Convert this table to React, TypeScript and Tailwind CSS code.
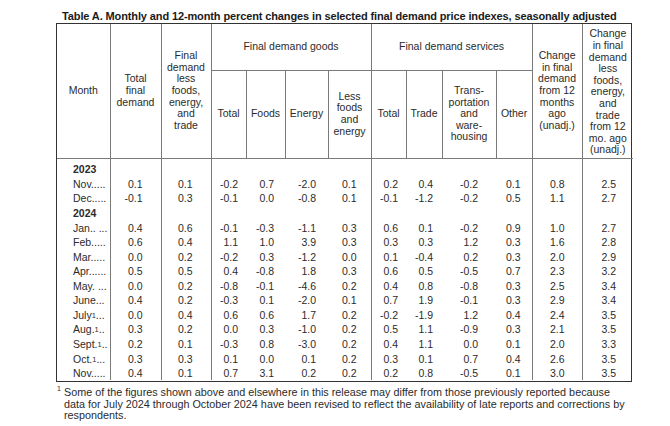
import React from 'react';

type Row = { label: string; sup?: boolean; dots: string; values?: string[]; year?: boolean };

const rows: Row[] = [
  { label: '2023', dots: '', year: true },
  { label: 'Nov.', dots: '....', values: ['0.1', '0.1', '-0.2', '0.7', '-2.0', '0.1', '0.2', '0.4', '-0.2', '0.1', '0.8', '2.5'] },
  { label: 'Dec.', dots: '....', values: ['-0.1', '0.3', '-0.1', '0.0', '-0.8', '0.1', '-0.1', '-1.2', '-0.2', '0.5', '1.1', '2.7'] },
  { label: '2024', dots: '', year: true },
  { label: 'Jan.', dots: '. ...', values: ['0.4', '0.6', '-0.1', '-0.3', '-1.1', '0.3', '0.6', '0.1', '-0.2', '0.9', '1.0', '2.7'] },
  { label: 'Feb.', dots: '....', values: ['0.6', '0.4', '1.1', '1.0', '3.9', '0.3', '0.3', '0.3', '1.2', '0.3', '1.6', '2.8'] },
  { label: 'Mar.', dots: '....', values: ['0.0', '0.2', '-0.2', '0.3', '-1.2', '0.0', '0.1', '-0.4', '0.2', '0.3', '2.0', '2.9'] },
  { label: 'Apr.', dots: '.....', values: ['0.5', '0.5', '0.4', '-0.8', '1.8', '0.3', '0.6', '0.5', '-0.5', '0.7', '2.3', '3.2'] },
  { label: 'May.', dots: ' ...', values: ['0.0', '0.2', '-0.8', '-0.1', '-4.6', '0.2', '0.4', '0.8', '-0.8', '0.3', '2.5', '3.4'] },
  { label: 'June', dots: '...', values: ['0.4', '0.2', '-0.3', '0.1', '-2.0', '0.1', '0.7', '1.9', '-0.1', '0.3', '2.9', '3.4'] },
  { label: 'July', sup: true, dots: '...', values: ['0.0', '0.4', '0.6', '0.6', '1.7', '0.2', '-0.2', '-1.9', '1.2', '0.4', '2.4', '3.5'] },
  { label: 'Aug.', sup: true, dots: '..', values: ['0.3', '0.2', '0.0', '0.3', '-1.0', '0.2', '0.5', '1.1', '-0.9', '0.3', '2.1', '3.5'] },
  { label: 'Sept.', sup: true, dots: '..', values: ['0.2', '0.1', '-0.3', '0.8', '-3.0', '0.2', '0.4', '1.1', '0.0', '0.1', '2.0', '3.3'] },
  { label: 'Oct.', sup: true, dots: '...', values: ['0.3', '0.3', '0.1', '0.0', '0.1', '0.2', '0.3', '0.1', '0.7', '0.4', '2.6', '3.5'] },
  { label: 'Nov.', dots: '....', values: ['0.4', '0.1', '0.7', '3.1', '0.2', '0.2', '0.2', '0.8', '-0.5', '0.1', '3.0', '3.5'] },
];

// per value column: right padding and whether a rule sits on its left
const cols = [
  { pr: 'pr-[18px]', rule: true },
  { pr: 'pr-[18px]', rule: true },
  { pr: 'pr-[8px]', rule: true },
  { pr: 'pr-[11px]', rule: false },
  { pr: 'pr-[12px]', rule: false },
  { pr: 'pr-[14px]', rule: false },
  { pr: 'pr-[8px]', rule: true },
  { pr: 'pr-[9px]', rule: false },
  { pr: 'pr-[18px]', rule: false },
  { pr: 'pr-[11px]', rule: false },
  { pr: 'pr-[17px]', rule: true },
  { pr: 'pr-[17px]', rule: true },
];

const widths = [53, 51, 50, 35, 39, 43, 43, 35, 36, 54, 36, 50, 51];

const th = 'border border-[#7a7a7a] font-normal text-center align-middle leading-[11.6px] p-0';

export default function App() {
  return (
    <div className="w-[670px] h-[426px] bg-white text-[#2b2b2b] font-['Liberation_Sans',Arial,sans-serif] text-[10.5px]">
      <div className="pl-[62px] pt-[10px] h-[23px] font-bold text-[11px] leading-[12px] text-[#1a1a1a] tracking-[-0.12px] whitespace-nowrap">
        Table A. Monthly and 12-month percent changes in selected final demand price indexes, seasonally adjusted
      </div>
      <div className="ml-[56px] w-[576px] border-[1.5px] border-[#333]">
        <table className="w-full table-fixed border-collapse border-hidden">
          <colgroup>
            {widths.map((w, i) => (
              <col key={i} style={{ width: w }} />
            ))}
          </colgroup>
          <thead>
            <tr className="h-[46px]">
              <th rowSpan={2} className={th}>Month</th>
              <th rowSpan={2} className={th}>Total<br />final<br />demand</th>
              <th rowSpan={2} className={th}>Final<br />demand<br />less<br />foods,<br />energy,<br />and<br />trade</th>
              <th colSpan={4} className={th}>Final demand goods</th>
              <th colSpan={4} className={th}>Final demand services</th>
              <th rowSpan={2} className={th}>Change<br />in final<br />demand<br />from 12<br />months<br />ago<br />(unadj.)</th>
              <th rowSpan={2} className={`${th} pt-[3px]`}>Change<br />in final<br />demand<br />less<br />foods,<br />energy,<br />and<br />trade<br />from 12<br />mo. ago<br />(unadj.)</th>
            </tr>
            <tr className="h-[88px]">
              <th className={th}>Total</th>
              <th className={th}>Foods</th>
              <th className={th}>Energy</th>
              <th className={th}>Less<br />foods<br />and<br />energy</th>
              <th className={th}>Total</th>
              <th className={th}>Trade</th>
              <th className={th}>Trans-<br />portation<br />and<br />ware-<br />housing</th>
              <th className={th}>Other</th>
            </tr>
          </thead>
          <tbody>
            <tr className="h-[4px]">
              {widths.map((_, i) => (
                <td key={i} className={`p-0 ${i === 0 || cols[i - 1].rule ? 'border-l border-[#7a7a7a]' : ''}`} />
              ))}
            </tr>
            {rows.map((r, ri) => (
              <tr key={ri} className="h-[14.57px] leading-[14px]">
                <td className="p-0 pl-[16px] whitespace-nowrap overflow-hidden">
                  {r.year ? (
                    <span className="font-bold">{r.label}</span>
                  ) : (
                    <span>
                      {r.label}
                      {r.sup && <sup className="text-[7.5px] relative -top-[1px]">1</sup>}
                      {r.dots}
                    </span>
                  )}
                </td>
                {cols.map((c, ci) => (
                  <td
                    key={ci}
                    className={`p-0 text-right ${c.pr} ${c.rule ? 'border-l border-[#7a7a7a]' : ''}`}
                  >
                    {r.values ? r.values[ci] : ''}
                  </td>
                ))}
              </tr>
            ))}
            <tr className="h-[1px]">
              <td colSpan={13} className="p-0" />
            </tr>
          </tbody>
        </table>
      </div>
      <div className="flex pl-[57px] pt-[5px] text-[10.8px] leading-[11.5px] text-[#2b2b2b]">
        <sup className="text-[7px] w-[7px] shrink-0 relative top-[2px]">1</sup>
        <p className="w-[567px]">
          Some of the figures shown above and elsewhere in this release may differ from those previously reported because data for July 2024 through October 2024 have been revised to reflect the availability of late reports and corrections by respondents.
        </p>
      </div>
    </div>
  );
}
